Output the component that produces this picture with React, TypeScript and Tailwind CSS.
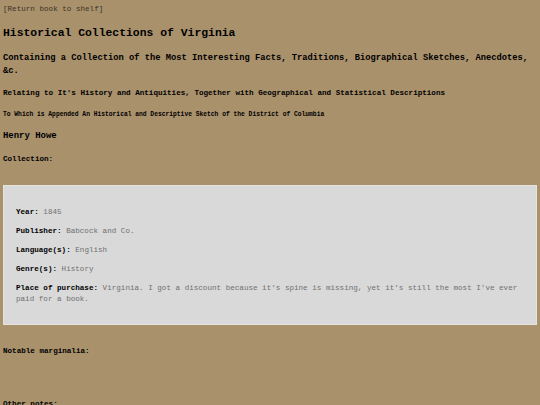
import React from "react";

const mono = { fontFamily: '"Liberation Mono", "Courier New", monospace' };

function Field({ label, value }: { label: string; value: string }) {
  return (
    <p className="mt-[8px] text-[7.6px] leading-[11px] first:mt-0">
      <span className="font-bold text-black">{label}:</span>{" "}
      <span className="text-[#707070]">{value}</span>
    </p>
  );
}

export default function App() {
  return (
    <div
      className="min-h-[405px] w-full overflow-hidden bg-[#a9916c] pl-[3px] pr-[3px] pt-[4px] text-black"
      style={mono}
    >
      <a className="block text-[7.6px] leading-[11px] text-[#3f3425]">
        [Return book to shelf]
      </a>
      <h1 className="mt-[11px] text-[11.4px] font-bold leading-[14px]">
        Historical Collections of Virginia
      </h1>
      <h2 className="mt-[12px] text-[8.75px] font-bold leading-[13px]">
        Containing a Collection of the Most Interesting Facts, Traditions,
        Biographical Sketches, Anecdotes, &amp;c.
      </h2>
      <h3 className="mt-[10px] text-[7.6px] font-bold leading-[11px]">
        Relating to It's History and Antiquities, Together with Geographical
        and Statistical Descriptions
      </h3>
      <h4 className="mt-[11px] text-[6.3px] font-bold leading-[9px]">
        To Which is Appended An Historical and Descriptive Sketch of the
        District of Columbia
      </h4>
      <h3 className="mt-[11px] text-[8.95px] font-bold leading-[13px]">
        Henry Howe
      </h3>
      <p className="mt-[11px] text-[7.6px] font-bold leading-[11px]">
        Collection:
      </p>

      <section className="mt-[20px] border border-[#e6e3de] bg-[#d9d9d9] px-[12px] pb-[19px] pt-[21px]">
        <Field label="Year" value="1845" />
        <Field label="Publisher" value="Babcock and Co." />
        <Field label="Language(s)" value="English" />
        <Field label="Genre(s)" value="History" />
        <Field
          label="Place of purchase"
          value="Virginia. I got a discount because it's spine is missing, yet it's still the most I've ever paid for a book."
        />
      </section>

      <p className="mt-[21px] text-[7.6px] font-bold leading-[11px]">
        Notable marginalia:
      </p>
      <p className="mt-[42px] text-[7.6px] font-bold leading-[11px]">
        Other notes:
      </p>
    </div>
  );
}
